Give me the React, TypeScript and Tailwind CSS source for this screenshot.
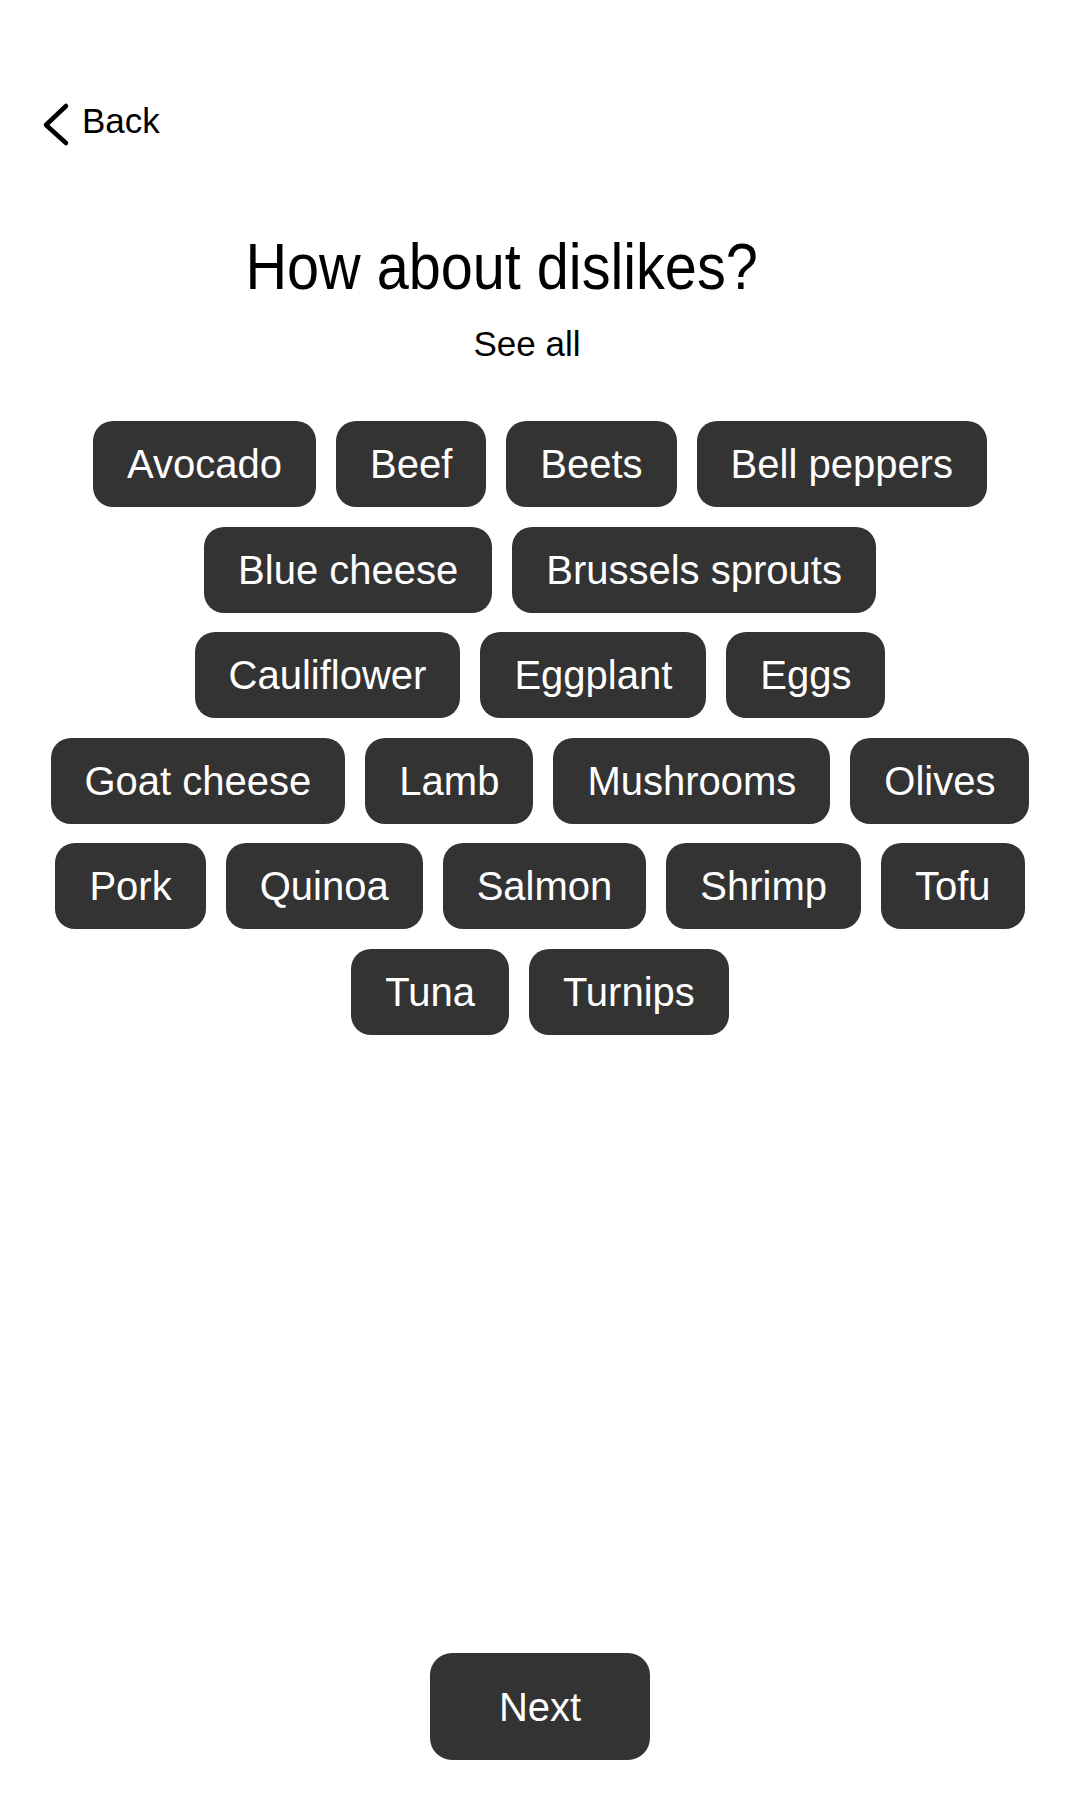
import React from "react";

const rows: string[][] = [
  ["Avocado", "Beef", "Beets", "Bell peppers"],
  ["Blue cheese", "Brussels sprouts"],
  ["Cauliflower", "Eggplant", "Eggs"],
  ["Goat cheese", "Lamb", "Mushrooms", "Olives"],
  ["Pork", "Quinoa", "Salmon", "Shrimp", "Tofu"],
  ["Tuna", "Turnips"],
];

const Chip = ({ label }: { label: string }) => (
  <button className="bg-[#333333] text-white text-[40px] leading-[46px] px-[34px] py-5 rounded-[20px] whitespace-nowrap">
    {label}
  </button>
);

export default function App() {
  return (
    <div className="min-h-[1800px] w-[1080px] bg-white flex flex-col font-['Liberation_Sans',Arial,sans-serif] text-black">
      <div className="flex items-start pt-[101px] pl-[41px]">
        <svg width="30" height="46" viewBox="0 0 30 46" className="mt-[1px]" fill="none">
          <path
            d="M25 4 L5 23 L25 41"
            stroke="#000"
            strokeWidth="4.5"
            strokeLinecap="round"
            strokeLinejoin="round"
          />
        </svg>
        <span className="ml-[11px] text-[35px] leading-[40px]">Back</span>
      </div>

      <h1 className="mt-[84px] text-center text-[64px] leading-[70px] font-normal pr-[76px]">
        <span className="inline-block scale-x-[0.9]">How about dislikes?</span>
      </h1>
      <div className="mt-[22px] text-center text-[35px] leading-[40px] pr-[26px]">See all</div>

      <div className="mt-[57px] flex flex-col gap-y-[19.5px]">
        {rows.map((row, i) => (
          <div key={i} className="flex justify-center gap-5">
            {row.map((item) => (
              <Chip key={item} label={item} />
            ))}
          </div>
        ))}
      </div>

      <div className="mt-auto flex justify-center pb-[40px]">
        <button className="w-[220px] h-[107px] bg-[#333333] text-white text-[40px] rounded-[22px]">
          Next
        </button>
      </div>
    </div>
  );
}
